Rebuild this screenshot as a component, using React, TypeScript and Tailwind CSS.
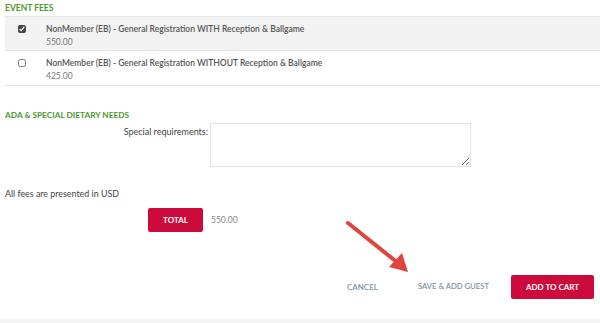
export default function App() {
  return (
    <div className="relative h-[323px] w-[600px] overflow-hidden bg-white font-['Lato',sans-serif] text-[#555]">
      <div className="pl-[5px] pt-[3px]">
        <div className="text-[8.5px] font-bold leading-[11px] text-[#4b9a2c]">EVENT FEES</div>
        <div className="mt-[2px] border-t border-[#e6e6e6]">
          <div className="flex h-[34px] items-start border-b border-[#e2e2e2] bg-[#f2f2f2] pt-[6px]">
            <input type="checkbox" defaultChecked className="ml-[13px] mt-[2px] h-[8px] w-[8px] accent-[#444]" />
            <div className="ml-[20px]">
              <div className="text-[8.5px] font-semibold leading-[12px] text-[#555]">NonMember (EB) - General Registration WITH Reception &amp; Ballgame</div>
              <div className="mt-[1px] text-[8.5px] leading-[12px] text-[#777]">550.00</div>
            </div>
          </div>
          <div className="flex h-[35px] items-start border-b border-[#e2e2e2] pt-[6px]">
            <input type="checkbox" className="ml-[13px] mt-[2px] h-[8px] w-[8px]" />
            <div className="ml-[20px]">
              <div className="text-[8.5px] font-semibold leading-[12px] text-[#555]">NonMember (EB) - General Registration WITHOUT Reception &amp; Ballgame</div>
              <div className="mt-[1px] text-[8.5px] leading-[12px] text-[#777]">425.00</div>
            </div>
          </div>
        </div>

        <div className="mt-[24px] text-[8.3px] font-bold leading-[11px] text-[#4b9a2c]">ADA &amp; SPECIAL DIETARY NEEDS</div>
        <div className="mt-[2px] flex items-start">
          <div className="w-[203px] pt-[3px] text-right text-[9px] leading-[12px] text-[#444]">Special requirements:</div>
          <textarea className="ml-[2px] h-[44px] w-[261px] resize-y border border-[#e3e3e3] bg-white" />
        </div>

        <div className="mt-[21px] text-[8.9px] leading-[12px] text-[#444]">All fees are presented in USD</div>
        <div className="mt-[8px] flex items-center">
          <div className="ml-[143px] flex h-[24px] w-[55px] items-center justify-center rounded-[2px] bg-[#cc0a3c] text-[8px] font-bold text-white">TOTAL</div>
          <div className="ml-[8px] text-[8.5px] text-[#888]">550.00</div>
        </div>

        <div className="mt-[43px] flex items-center justify-end pr-[6px]">
          <div className="mr-[40px] text-[8px] font-semibold text-[#7e93a3]">CANCEL</div>
          <div className="mr-[22px] text-[7.7px] font-semibold text-[#7e93a3]">SAVE &amp; ADD GUEST</div>
          <div className="flex h-[24px] w-[83px] items-center justify-center rounded-[2px] bg-[#cc0a3c] text-[8px] font-bold text-white">ADD TO CART</div>
        </div>
      </div>

      <div className="absolute bottom-0 left-0 h-[4px] w-full bg-[#f3f3f3]" />

      <svg className="absolute left-0 top-0" width="600" height="323" viewBox="0 0 600 323">
        <line x1="348" y1="223" x2="398" y2="263" stroke="#e0453d" strokeWidth="4" strokeLinecap="round" />
        <polygon points="408,272 389,267 402,253" fill="#e0453d" />
      </svg>
    </div>
  )
}
